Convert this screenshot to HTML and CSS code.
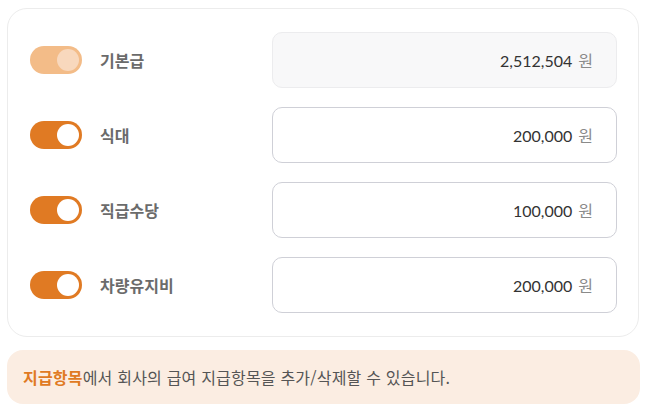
FILE: index.html
```html
<!DOCTYPE html>
<html lang="ko">
<head>
<meta charset="utf-8">
<link rel="stylesheet" href="styles.css">
</head>
<body>
<div class="wrap">
  <div class="card">
    <div class="row">
      <div class="item">
        <span class="toggle disabled"><span class="knob"></span></span>
        <span class="label">기본급</span>
      </div>
      <div class="field readonly"><span class="num">2,512,504</span><span class="unit">원</span></div>
    </div>
    <div class="row">
      <div class="item">
        <span class="toggle"><span class="knob"></span></span>
        <span class="label">식대</span>
      </div>
      <div class="field"><span class="num">200,000</span><span class="unit">원</span></div>
    </div>
    <div class="row">
      <div class="item">
        <span class="toggle"><span class="knob"></span></span>
        <span class="label">직급수당</span>
      </div>
      <div class="field"><span class="num">100,000</span><span class="unit">원</span></div>
    </div>
    <div class="row">
      <div class="item">
        <span class="toggle"><span class="knob"></span></span>
        <span class="label">차량유지비</span>
      </div>
      <div class="field"><span class="num">200,000</span><span class="unit">원</span></div>
    </div>
  </div>
  <div class="notice"><strong>지급항목</strong>에서 회사의 급여 지급항목을 추가/삭제할 수 있습니다.</div>
</div>
</body>
</html>
```

FILE: styles.css
```css
* { box-sizing: border-box; }
html, body { margin: 0; padding: 0; background: #fff; }
body {
  font-family: "Noto Sans CJK KR", "Noto Sans", sans-serif;
  color: #333;
}
.wrap {
  padding: 8px 9px 0 7px;
  display: flex;
  flex-direction: column;
  gap: 13px;
}
.card {
  border: 1px solid #ececec;
  border-radius: 20px;
  padding: 23px 21px 23px 22px;
  display: flex;
  flex-direction: column;
  gap: 19px;
  width: 632px;
}
.row {
  display: grid;
  grid-template-columns: 242px 1fr;
  align-items: center;
}
.item {
  display: flex;
  align-items: center;
  gap: 18px;
}
.toggle {
  width: 52px;
  height: 28px;
  border-radius: 14px;
  background: #e07a23;
  display: flex;
  align-items: center;
  justify-content: flex-end;
  padding: 3px;
}
.knob {
  width: 22px;
  height: 22px;
  border-radius: 50%;
  background: #fff;
}
.toggle.disabled { background: #f3bc88; }
.toggle.disabled .knob { background: #f8d8bd; }
.label {
  font-size: 16px;
  font-weight: 700;
  color: #6b6b6b;
}
.field {
  height: 56px;
  border: 1px solid #cfd0d7;
  border-radius: 10px;
  display: flex;
  align-items: center;
  justify-content: flex-end;
  padding-right: 23px;
  gap: 6px;
  background: #fff;
}
.field.readonly {
  background: #f8f8f9;
  border-color: #ececee;
}
.num {
  font-family: Lato, "Noto Sans", sans-serif;
  font-size: 16px;
  color: #333;
}
.unit {
  font-size: 16px;
  color: #8a8a8a;
}
.notice {
  background: #fbede2;
  border-radius: 16px;
  height: 54px;
  width: 633px;
  display: flex;
  align-items: center;
  padding-left: 16px;
  font-size: 16px;
  letter-spacing: 0.2px;
  color: #555;
}
.notice strong {
  color: #e07a23;
  font-weight: 700;
}
```
